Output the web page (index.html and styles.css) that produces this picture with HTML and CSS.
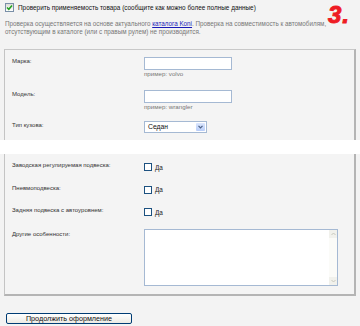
FILE: index.html
```html
<!DOCTYPE html>
<html lang="ru">
<head>
  <meta charset="UTF-8">
  <title>Проверка применяемости</title>
  <link rel="stylesheet" href="styles.css">
</head>
<body>
  <div class="page">
    <!-- Check applicability -->
    <div class="check-line">
      <span class="box checked">
        <svg width="7" height="7" viewBox="0 0 7 7"><path d="M1 3.5 L2.8 5.3 L6 1.5" fill="none" stroke="#21a121" stroke-width="1.5"/></svg>
      </span>
      <span class="check-text">Проверить применяемость товара (сообщите как можно более полные данные)</span>
    </div>
    <div class="step">3.</div>

    <p class="note">Проверка осуществляется на основе актуального <a href="#">каталога Koni</a>. Проверка на совместимость к автомобилям, отсутствующим в каталоге (или с правым рулем) не производится.</p>

    <!-- Car data -->
    <div class="panel panel-top">
      <div class="row row-first">
        <div class="label">Марка:</div>
        <div class="field">
          <div class="input"></div>
          <div class="hint">пример: volvo</div>
        </div>
      </div>
      <div class="row row-second">
        <div class="label">Модель:</div>
        <div class="field">
          <div class="input"></div>
          <div class="hint">пример: wrangler</div>
        </div>
      </div>
      <div class="row row-third">
        <div class="label">Тип кузова:</div>
        <div class="field">
          <div class="select">
            <span class="select-value">Седан</span>
            <span class="select-btn">
              <svg width="5" height="4" viewBox="0 0 5 4"><path d="M0.5 0.8 L2.5 2.8 L4.5 0.8" fill="none" stroke="#4d6185" stroke-width="1.2"/></svg>
            </span>
          </div>
        </div>
      </div>
    </div>

    <div class="gap"></div>

    <!-- Suspension -->
    <div class="panel panel-bottom">
      <div class="opt-row">
        <div class="label">Заводская регулируемая подвеска:</div>
        <div class="opt"><span class="box"></span>Да</div>
      </div>
      <div class="opt-row">
        <div class="label">Пневмоподвеска:</div>
        <div class="opt"><span class="box"></span>Да</div>
      </div>
      <div class="opt-row">
        <div class="label">Задняя подвеска с автоуровнем:</div>
        <div class="opt"><span class="box"></span>Да</div>
      </div>
      <div class="text-row">
        <div class="label">Другие особенности:</div>
        <div class="textarea">
          <div class="scroll">
            <span class="scroll-btn">
              <svg width="5" height="4" viewBox="0 0 5 4"><path d="M0.5 3 L2.5 1 L4.5 3" fill="none" stroke="#c8c8bc" stroke-width="1"/></svg>
            </span>
            <span class="scroll-btn">
              <svg width="5" height="4" viewBox="0 0 5 4"><path d="M0.5 1 L2.5 3 L4.5 1" fill="none" stroke="#c8c8bc" stroke-width="1"/></svg>
            </span>
          </div>
        </div>
      </div>
    </div>

    <div class="actions">
      <button class="button">Продолжить оформление</button>
    </div>
  </div>
</body>
</html>
```

FILE: styles.css
```css
/* Page */
body {
  margin: 0;
  background-color: #f3f3f3;
  font-family: 'Liberation Sans', Arial, sans-serif;
  color: #333;
}

.page {
  position: relative;
  padding: 3px 4px 0 4px;
}

/* Header line with checkbox */
.check-line {
  display: flex;
  align-items: center;
  padding-left: 1px;
  height: 9px;
}

.check-line .check-text {
  margin-left: 4px;
  font-size: 6.4px;
  color: #111;
  line-height: 9px;
}

.box {
  display: inline-flex;
  align-items: center;
  justify-content: center;
  box-sizing: border-box;
  width: 8px;
  height: 8px;
  border: 1px solid #1c5180;
  background-color: #fff;
}

.box.checked {
  width: 9px;
  height: 9px;
  border-color: #7a8fa8;
  background: linear-gradient(#dcdcd6, #fff);
}

.step {
  position: absolute;
  top: 0;
  right: 10px;
  color: #ee1c24;
  font-size: 24px;
  font-weight: bold;
  font-style: italic;
  line-height: 30px;
  letter-spacing: 1px;
  -webkit-text-stroke: 1px #ee1c24;
}

/* Note */
.note {
  margin: 8px 0 13px 1px;
  padding-right: 22px;
  font-size: 6.3px;
  line-height: 8px;
  color: #777;
}

.note a {
  color: #1a1ab8;
}

/* Panels */
.panel {
  background-color: #f4f4f4;
  border-left: 1px solid #c4c4c4;
  border-right: 2px solid #b4b4b4;
  font-size: 6px;
  color: #333;
}

.panel-top {
  border-top: 1px solid #c8c8c8;
  padding: 7px 0 7px 7px;
}

.panel-bottom {
  border-bottom: 2px solid #b4b4b4;
  padding: 7px 0 8px 7px;
}

.gap {
  height: 14px;
  margin: 0 -4px;
  background-color: #fff;
}

.row {
  display: flex;
}

.row-second {
  margin-top: 12px;
}

.row-third {
  margin-top: 10px;
}

.label {
  width: 132px;
  flex-shrink: 0;
  line-height: 8px;
}

.input {
  box-sizing: border-box;
  width: 88px;
  height: 13px;
  border: 1px solid #a5b9d3;
  background-color: #fff;
}

.hint {
  font-size: 6.2px;
  line-height: 8px;
  color: #777;
}

.select {
  display: flex;
  justify-content: space-between;
  box-sizing: border-box;
  width: 63px;
  height: 12px;
  border: 1px solid #a5b9d3;
  background-color: #fff;
}

.select-value {
  padding-left: 3px;
  font-size: 6.8px;
  line-height: 10px;
  color: #111;
}

.select-btn {
  display: flex;
  align-items: center;
  justify-content: center;
  width: 9px;
  margin: 1px;
  background: linear-gradient(#dbe6fd, #b8cdf8);
  border-radius: 1px;
}

/* Options */
.opt-row {
  display: flex;
  height: 22.5px;
}

.opt {
  display: flex;
  align-items: center;
  margin-top: 2px;
  height: 8px;
  font-size: 6.4px;
  color: #222;
}

.opt .box {
  margin-right: 3px;
}

.text-row {
  display: flex;
}

.text-row .label {
  margin-top: 1px;
}

.textarea {
  display: flex;
  justify-content: flex-end;
  box-sizing: border-box;
  width: 194px;
  height: 57px;
  border: 1px solid #a5b9d3;
  background-color: #fff;
}

.scroll {
  display: flex;
  flex-direction: column;
  justify-content: space-between;
  width: 8px;
  background-color: #fbfbf8;
}

.scroll-btn {
  display: flex;
  align-items: center;
  justify-content: center;
  height: 8px;
  background-color: #f1f1ec;
}

/* Button */
.actions {
  padding: 17px 0 0 2px;
}

.button {
  display: block;
  box-sizing: border-box;
  width: 126px;
  height: 11px;
  padding: 0;
  border: 1px solid #003c74;
  border-radius: 2px;
  background: linear-gradient(#ffffff, #ecebe4);
  font-family: 'Liberation Sans', Arial, sans-serif;
  font-size: 7.2px;
  line-height: 9px;
  color: #111;
}
```
